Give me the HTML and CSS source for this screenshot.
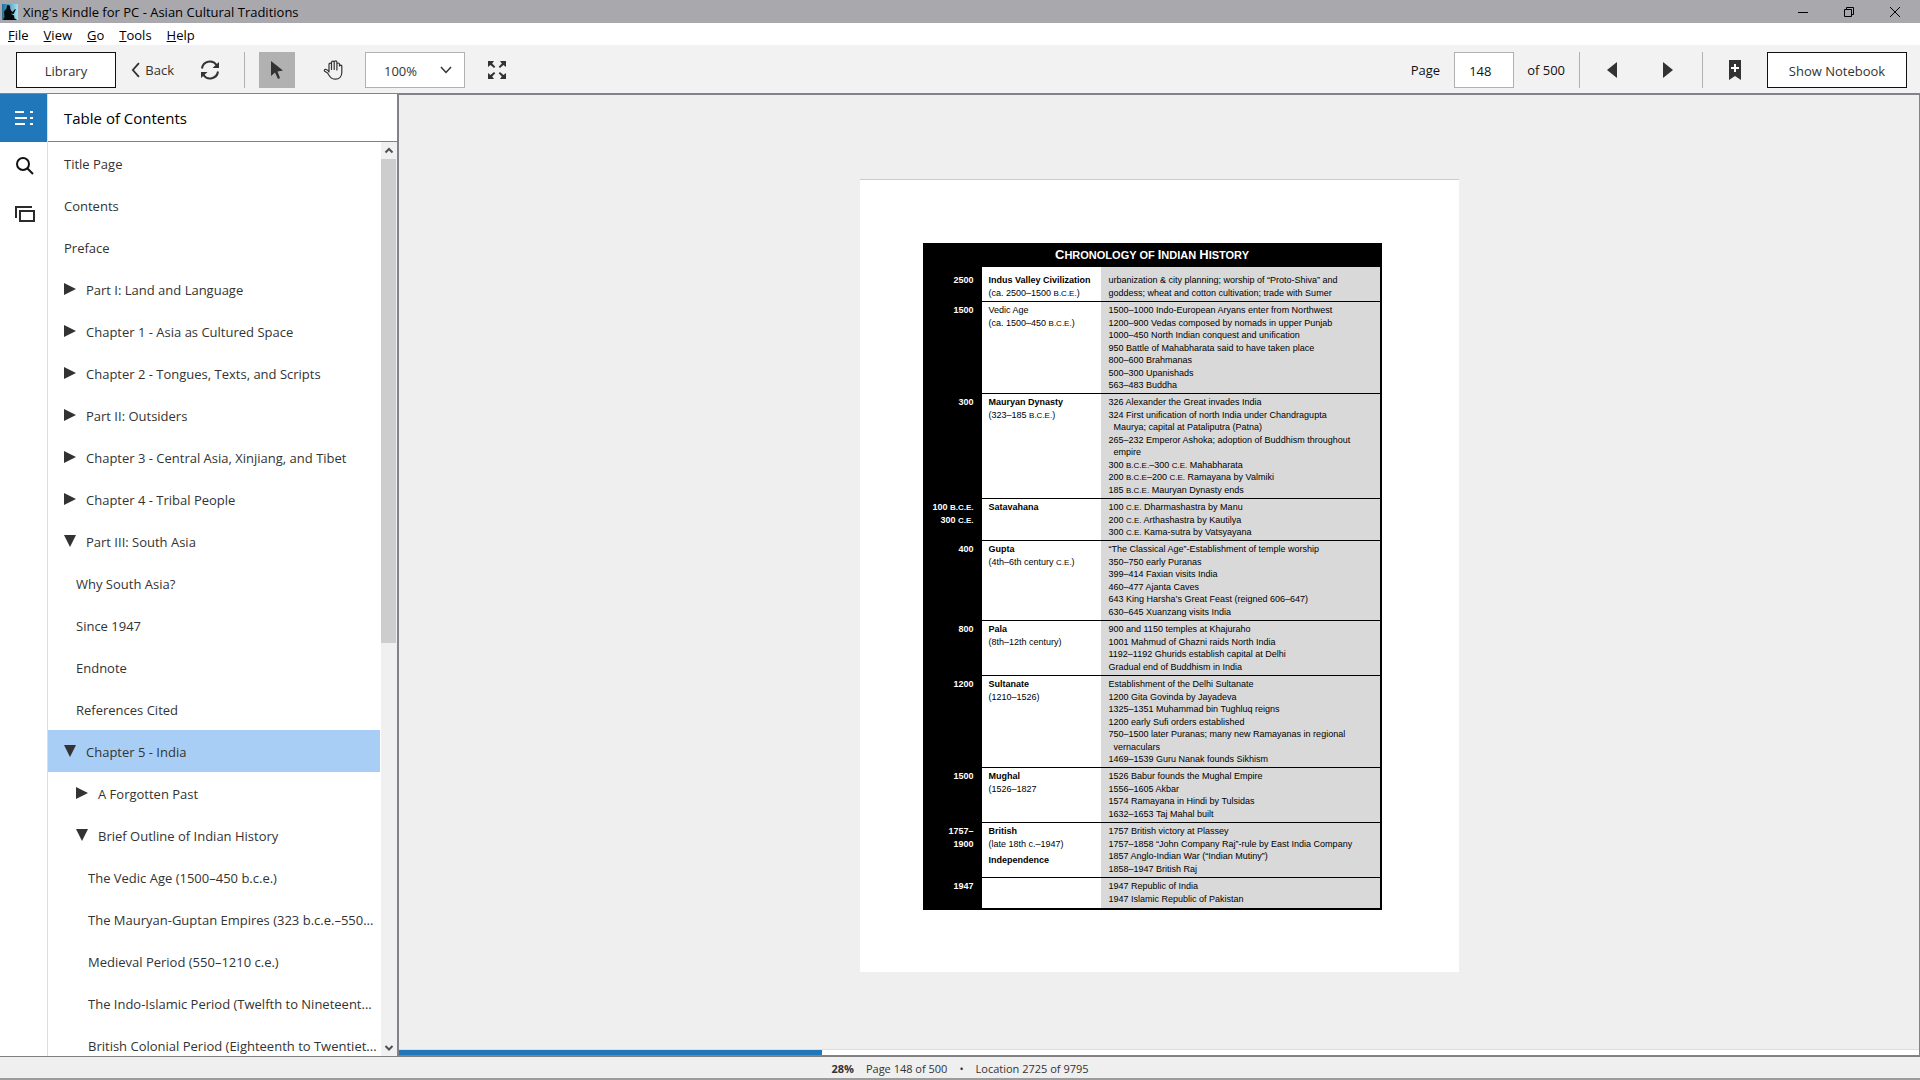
FILE: index.html
```html
<!DOCTYPE html>
<html lang="en">
<head>
    <meta charset="UTF-8">
    <meta name="viewport" content="width=device-width, initial-scale=1.0">
    <title>Xing's Kindle for PC - Asian Cultural Traditions</title>
    <link rel="stylesheet" href="styles.css">
</head>
<body>

    <header class="titlebar">
        <svg class="app-icon" width="16" height="16" viewBox="0 0 16 16">
            <defs>
                <linearGradient id="sky" x1="0" y1="0" x2="1" y2="0">
                    <stop offset="0" stop-color="#1f6f9c"/>
                    <stop offset="1" stop-color="#a5e3f2"/>
                </linearGradient>
            </defs>
            <rect width="16" height="16" fill="url(#sky)"/>
            <path d="M5 1.500a2 2 0 0 1 3 2.500l1 2.500 1.500 1.500L13 5l.8.500-2.300 4.500-3-.5 3.500 2 .5 3 2 .7v.8H1l1.500-3L2 7.500l2.500-3z" fill="#05090c"/>
        </svg>
        <span class="window-title">Xing's Kindle for PC - Asian Cultural Traditions</span>
        <div class="window-buttons">
            <button aria-label="Minimize"><svg width="12" height="12" viewBox="0 0 12 12"><path d="M1 6.5h10"/></svg></button>
            <button aria-label="Restore"><svg width="12" height="12" viewBox="0 0 12 12"><path d="M1.500 3.500h7v7h-7zM3.500 3.500v-2h7v7h-2"/></svg></button>
            <button aria-label="Close"><svg width="12" height="12" viewBox="0 0 12 12"><path d="M1 1l10 10M11 1L1 11"/></svg></button>
        </div>
    </header>

    <nav class="menubar">
        <a href="#"><u>F</u>ile</a>
        <a href="#"><u>V</u>iew</a>
        <a href="#"><u>G</u>o</a>
        <a href="#"><u>T</u>ools</a>
        <a href="#"><u>H</u>elp</a>
    </nav>

    <div class="toolbar">
        <button class="btn btn-library">Library</button>
        <button class="btn-back">
            <svg width="10" height="18" viewBox="0 0 10 18"><path d="M8.500 1.500L2 9l6.500 7.500" fill="none" stroke="#333" stroke-width="2"/></svg>
            Back
        </button>
        <button class="icon-btn btn-sync" aria-label="Sync">
            <svg width="20" height="20" viewBox="0 0 20 20">
                <path d="M2 8.500A8 8 0 0 1 16.500 5M18 11.500A8 8 0 0 1 3.500 15" fill="none" stroke="#333" stroke-width="2"/>
                <path d="M19 2v6h-6.500zM1 18v-6h6.500z" fill="#333"/>
            </svg>
        </button>
        <span class="separator"></span>
        <button class="icon-btn btn-pointer active" aria-label="Select">
            <svg width="12" height="18" viewBox="0 0 12 18"><path d="M0 0v15l4-3.500 3 6.500 2-1-2.500-6.500L12 9.500z" fill="#333"/></svg>
        </button>
        <button class="icon-btn btn-hand" aria-label="Pan">
            <svg width="20" height="20" viewBox="0 0 20 20">
                <path d="M6 12V4.300a1.200 1.200 0 0 1 2.500 0V9.500 2.500a1.200 1.200 0 0 1 2.700 0V9.500 2.300a1.200 1.200 0 0 1 2.700 0V10 4.300a1.200 1.200 0 0 1 2.600 0V6a1.200 1.200 0 0 1 2.300 0v6.500c0 4-2.500 6.700-6.300 6.700-3 0-4.800-1.200-6-3.200L4.500 13 1.700 11.300c-1-.8 0-2.300 1.500-1.800C4.600 10 5.500 11 6 12z" fill="none" stroke="#333" stroke-width="1.200" stroke-linejoin="round"/>
            </svg>
        </button>
        <div class="zoom">
            <select aria-label="Zoom level">
                <option>100%</option>
            </select>
            <svg width="12" height="8" viewBox="0 0 12 8"><path d="M1 1l5 5.500L11 1" fill="none" stroke="#333" stroke-width="1.500"/></svg>
        </div>
        <button class="icon-btn btn-full" aria-label="Full screen">
            <svg width="20" height="20" viewBox="0 0 20 20">
                <path d="M1 1h6L5.200 3.400 8.300 6.700 7 8 3.500 5 1 7zM19 1v6l-2.500-2L13 8l-1.300-1.300 3.100-3.300L13 1zM1 19v-6l2.500 2L7 12l1.300 1.300-3.100 3.300L7 19zM19 19h-6l1.800-2.400-3.100-3.300L13 12l3.500 3 2.500-2z" fill="#333"/>
            </svg>
        </button>

        <div class="toolbar-right">
            <label for="page-number">Page</label>
            <input id="page-number" type="text" value="148">
            <span class="page-total">of 500</span>
            <span class="separator"></span>
            <button class="icon-btn btn-prev" aria-label="Previous page">
                <svg width="10" height="16" viewBox="0 0 10 16"><path d="M10 0v16L0 8z" fill="#333"/></svg>
            </button>
            <button class="icon-btn btn-next" aria-label="Next page">
                <svg width="10" height="16" viewBox="0 0 10 16"><path d="M0 0v16l10-8z" fill="#333"/></svg>
            </button>
            <span class="separator"></span>
            <button class="icon-btn btn-bookmark" aria-label="Bookmark">
                <svg width="12" height="20" viewBox="0 0 12 20"><path d="M0 0h12v20l-6-4-6 4z" fill="#333"/><path d="M6 4v8M2 8h8" stroke="#fff" stroke-width="2"/></svg>
            </button>
            <button class="btn btn-notebook">Show Notebook</button>
        </div>
    </div>

    <div class="workspace">
        <div class="rail">
            <button class="rail-btn active" aria-label="Table of Contents">
                <svg width="20" height="16" viewBox="0 0 20 16"><path d="M0 2h9M0 8h12M0 14h10M15 2h3M15 8h3M15 14h3" stroke="#fff" stroke-width="2"/></svg>
            </button>
            <button class="rail-btn" aria-label="Search">
                <svg width="20" height="20" viewBox="0 0 20 20"><circle cx="8" cy="8" r="6" fill="none" stroke="#111" stroke-width="2"/><path d="M12 12l6 6" stroke="#111" stroke-width="2"/></svg>
            </button>
            <button class="rail-btn" aria-label="Flashcards">
                <svg width="20" height="16" viewBox="0 0 20 16"><path d="M1 12V1h16M5 5h14v10H5z" fill="none" stroke="#2b2b2b" stroke-width="2"/></svg>
            </button>
        </div>

        <aside class="toc">
            <h2>Table of Contents</h2>
            <div class="toc-body">
                <ul>
                    <li><a href="#">Title Page</a></li>
                    <li><a href="#">Contents</a></li>
                    <li><a href="#">Preface</a></li>
                    <li><a href="#" class="closed">Part I: Land and Language</a></li>
                    <li><a href="#" class="closed">Chapter 1 - Asia as Cultured Space</a></li>
                    <li><a href="#" class="closed">Chapter 2 - Tongues, Texts, and Scripts</a></li>
                    <li><a href="#" class="closed">Part II: Outsiders</a></li>
                    <li><a href="#" class="closed">Chapter 3 - Central Asia, Xinjiang, and Tibet</a></li>
                    <li><a href="#" class="closed">Chapter 4 - Tribal People</a></li>
                    <li><a href="#" class="open">Part III: South Asia</a></li>
                    <li class="level-2"><a href="#">Why South Asia?</a></li>
                    <li class="level-2"><a href="#">Since 1947</a></li>
                    <li class="level-2"><a href="#">Endnote</a></li>
                    <li class="level-2"><a href="#">References Cited</a></li>
                    <li class="selected"><a href="#" class="open">Chapter 5 - India</a></li>
                    <li class="level-2"><a href="#" class="closed">A Forgotten Past</a></li>
                    <li class="level-2"><a href="#" class="open">Brief Outline of Indian History</a></li>
                    <li class="level-3"><a href="#">The Vedic Age (1500–450 b.c.e.)</a></li>
                    <li class="level-3"><a href="#">The Mauryan-Guptan Empires (323 b.c.e.–550...</a></li>
                    <li class="level-3"><a href="#">Medieval Period (550–1210 c.e.)</a></li>
                    <li class="level-3"><a href="#">The Indo-Islamic Period (Twelfth to Nineteent...</a></li>
                    <li class="level-3"><a href="#">British Colonial Period (Eighteenth to Twentiet...</a></li>
                </ul>
                <div class="scrollbar">
                    <svg width="16" height="17" viewBox="0 0 16 17"><path d="M4.500 10.500L8 7l3.500 3.500" fill="none" stroke="#505050" stroke-width="2"/></svg>
                    <div class="track"><div class="thumb"></div></div>
                    <svg width="16" height="17" viewBox="0 0 16 17"><path d="M4.500 7L8 10.500 11.500 7" fill="none" stroke="#505050" stroke-width="2"/></svg>
                </div>
            </div>
        </aside>

        <main class="reader">
            <div class="canvas">
                <article class="page">
                    <table class="chronology">
                        <caption><span>C</span>hronology of <span>I</span>ndian <span>H</span>istory</caption>
                        <tr>
                            <th>2500</th>
                            <td><p><b>Indus Valley Civilization</b></p><p>(ca. 2500–1500 <small>B.C.E.</small>)</p></td>
                            <td><p>urbanization &amp; city planning; worship of “Proto-Shiva” and</p><p>goddess; wheat and cotton cultivation; trade with Sumer</p></td>
                        </tr>
                        <tr>
                            <th>1500</th>
                            <td><p>Vedic Age</p><p>(ca. 1500–450 <small>B.C.E.</small>)</p></td>
                            <td>
                                <p>1500–1000 Indo-European Aryans enter from Northwest</p>
                                <p>1200–900 Vedas composed by nomads in upper Punjab</p>
                                <p>1000–450 North Indian conquest and unification</p>
                                <p>950 Battle of Mahabharata said to have taken place</p>
                                <p>800–600 Brahmanas</p>
                                <p>500–300 Upanishads</p>
                                <p>563–483 Buddha</p>
                            </td>
                        </tr>
                        <tr>
                            <th>300</th>
                            <td><p><b>Mauryan Dynasty</b></p><p>(323–185 <small>B.C.E.</small>)</p></td>
                            <td>
                                <p>326 Alexander the Great invades India</p>
                                <p>324 First unification of north India under Chandragupta</p>
                                <p class="indent">Maurya; capital at Pataliputra (Patna)</p>
                                <p>265–232 Emperor Ashoka; adoption of Buddhism throughout</p>
                                <p class="indent">empire</p>
                                <p>300 <small>B.C.E.</small>–300 <small>C.E.</small> Mahabharata</p>
                                <p>200 <small>B.C.E</small>–200 <small>C.E.</small> Ramayana by Valmiki</p>
                                <p>185 <small>B.C.E.</small> Mauryan Dynasty ends</p>
                            </td>
                        </tr>
                        <tr>
                            <th><p>100 <small>B.C.E.</small></p><p>300 <small>C.E.</small></p></th>
                            <td><p><b>Satavahana</b></p></td>
                            <td>
                                <p>100 <small>C.E.</small> Dharmashastra by Manu</p>
                                <p>200 <small>C.E.</small> Arthashastra by Kautilya</p>
                                <p>300 <small>C.E.</small> Kama-sutra by Vatsyayana</p>
                            </td>
                        </tr>
                        <tr>
                            <th>400</th>
                            <td><p><b>Gupta</b></p><p>(4th–6th century <small>C.E.</small>)</p></td>
                            <td>
                                <p>“The Classical Age”-Establishment of temple worship</p>
                                <p>350–750 early Puranas</p>
                                <p>399–414 Faxian visits India</p>
                                <p>460–477 Ajanta Caves</p>
                                <p>643 King Harsha’s Great Feast (reigned 606–647)</p>
                                <p>630–645 Xuanzang visits India</p>
                            </td>
                        </tr>
                        <tr>
                            <th>800</th>
                            <td><p><b>Pala</b></p><p>(8th–12th century)</p></td>
                            <td>
                                <p>900 and 1150 temples at Khajuraho</p>
                                <p>1001 Mahmud of Ghazni raids North India</p>
                                <p>1192–1192 Ghurids establish capital at Delhi</p>
                                <p>Gradual end of Buddhism in India</p>
                            </td>
                        </tr>
                        <tr>
                            <th>1200</th>
                            <td><p><b>Sultanate</b></p><p>(1210–1526)</p></td>
                            <td>
                                <p>Establishment of the Delhi Sultanate</p>
                                <p>1200 Gita Govinda by Jayadeva</p>
                                <p>1325–1351 Muhammad bin Tughluq reigns</p>
                                <p>1200 early Sufi orders established</p>
                                <p>750–1500 later Puranas; many new Ramayanas in regional</p>
                                <p class="indent">vernaculars</p>
                                <p>1469–1539 Guru Nanak founds Sikhism</p>
                            </td>
                        </tr>
                        <tr>
                            <th>1500</th>
                            <td><p><b>Mughal</b></p><p>(1526–1827</p></td>
                            <td>
                                <p>1526 Babur founds the Mughal Empire</p>
                                <p>1556–1605 Akbar</p>
                                <p>1574 Ramayana in Hindi by Tulsidas</p>
                                <p>1632–1653 Taj Mahal built</p>
                            </td>
                        </tr>
                        <tr>
                            <th><p>1757–</p><p>1900</p></th>
                            <td><p><b>British</b></p><p>(late 18th c.–1947)</p><p class="spaced"><b>Independence</b></p></td>
                            <td>
                                <p>1757 British victory at Plassey</p>
                                <p>1757–1858 “John Company Raj”-rule by East India Company</p>
                                <p>1857 Anglo-Indian War (“Indian Mutiny”)</p>
                                <p>1858–1947 British Raj</p>
                            </td>
                        </tr>
                        <tr>
                            <th>1947</th>
                            <td></td>
                            <td>
                                <p>1947 Republic of India</p>
                                <p>1947 Islamic Republic of Pakistan</p>
                            </td>
                        </tr>
                    </table>
                </article>
            </div>
            <div class="progress"><div class="progress-fill" style="width: 27.82%"></div></div>
        </main>
    </div>

    <footer class="statusbar">
        <b>28%</b>
        <span>Page 148 of 500</span>
        <span>•</span>
        <span>Location 2725 of 9795</span>
    </footer>

</body>
</html>
```
FILE: styles.css
```css
* {
    box-sizing: border-box;
}

body {
    display: flex;
    flex-direction: column;
    height: 100vh;
    margin: 0;
    overflow: hidden;
    font-family: "Open Sans", sans-serif;
    font-size: 13px;
    color: #333;
    background-color: #fff;
}

button, input, select {
    font: inherit;
    color: inherit;
}

button {
    display: flex;
    align-items: center;
    justify-content: center;
    padding: 0;
    border: none;
    background: none;
}

a {
    color: inherit;
    text-decoration: none;
}

/* Title bar */
.titlebar {
    display: flex;
    align-items: center;
    height: 23px;
    padding: 0 2px;
    background-color: #a9a8ad;
    color: #000;
}

.window-title {
    margin-left: 5px;
}

.window-buttons {
    display: flex;
    margin-left: auto;
}

.window-buttons button {
    width: 46px;
    height: 20px;
}

.window-buttons svg {
    fill: none;
    stroke: #000;
}

/* Menu */
.menubar {
    display: flex;
    align-items: center;
    gap: 15px;
    height: 22px;
    padding: 2px 8px 0;
    color: #000;
}

/* Toolbar */
.toolbar {
    display: flex;
    align-items: center;
    height: 49px;
    padding: 2px 13px 0 16px;
    border-bottom: 1px solid #808488;
    background-color: #f2f2f2;
}

.btn {
    height: 36px;
    border: 1px solid #111;
    background-color: #fff;
    padding-top: 2px;
}

.btn-library {
    width: 100px;
}

.btn-notebook {
    width: 140px;
    margin-left: 14px;
    color: #333;
}

.btn-back {
    justify-content: flex-start;
    gap: 5px;
    width: 43px;
    margin-left: 15px;
    white-space: nowrap;
}

.icon-btn {
    width: 36px;
    height: 36px;
}

.icon-btn.active {
    background-color: #b1b1b1;
}

.btn-sync {
    margin-left: 18px;
    margin-right: 16px;
}

.separator {
    width: 1px;
    height: 36px;
    background-color: #b1b1b1;
}

.btn-pointer {
    margin-left: 14px;
}

.btn-hand {
    margin-left: 20px;
}

.zoom {
    position: relative;
    width: 100px;
    margin-left: 14px;
}

.zoom select {
    width: 100%;
    height: 36px;
    padding: 2px 18px 0;
    border: 1px solid #b1b1b1;
    border-radius: 0;
    background-color: #fff;
    appearance: none;
}

.zoom svg {
    position: absolute;
    right: 13px;
    top: 14px;
    pointer-events: none;
}

.btn-full {
    margin-left: 14px;
}

.toolbar-right {
    display: flex;
    align-items: center;
    margin-left: auto;
    color: #111;
}

#page-number {
    width: 60px;
    height: 36px;
    margin: 0 13px 0 14px;
    padding: 2px 14px 0;
    border: 1px solid #b1b1b1;
    background-color: #fff;
}

.page-total {
    margin-right: 14px;
}

.btn-prev {
    margin-left: 14px;
}

.btn-next {
    margin: 0 16px 0 20px;
}

.btn-bookmark {
    margin-left: 14px;
}

/* Workspace */
.workspace {
    display: flex;
    flex: 1;
    min-height: 0;
}

.rail {
    width: 48px;
    border-right: 1px solid #ddd;
}

.rail-btn {
    width: 47px;
    height: 48px;
    padding-left: 2px;
}

.rail-btn.active {
    background-color: #2077ba;
}

.toc {
    display: flex;
    flex-direction: column;
    width: 351px;
    border-right: 2px solid #808488;
}

.toc h2 {
    height: 48px;
    margin: 0;
    padding-left: 16px;
    border-bottom: 1px solid #808080;
    font-size: 15px;
    font-weight: normal;
    line-height: 49px;
    color: #000;
}

.toc-body {
    display: flex;
    flex: 1;
    min-height: 0;
}

.toc ul {
    flex: 1;
    margin: 0 1px 0 0;
    padding: 0;
    overflow: hidden;
    list-style: none;
}

.toc li {
    padding-left: 16px;
}

.toc li.level-2 {
    padding-left: 28px;
}

.toc li.level-3 {
    padding-left: 40px;
}

.toc li.selected {
    background-color: #a9cef6;
}

.toc a {
    display: flex;
    align-items: center;
    height: 42px;
    padding-top: 2px;
    line-height: 18px;
    white-space: nowrap;
}

/* disclosure triangles */
.toc a.closed::before,
.toc a.open::before {
    content: "";
    width: 12px;
    height: 12px;
    margin: 0 10px 2px 0;
    background-color: #333;
}

.toc a.closed::before {
    clip-path: polygon(0 0, 100% 50%, 0 100%);
}

.toc a.open::before {
    clip-path: polygon(0 0, 100% 0, 50% 100%);
}

.scrollbar {
    display: flex;
    flex-direction: column;
    width: 16px;
    background-color: #f0f0f0;
}

.track {
    flex: 1;
}

.thumb {
    width: 15px;
    height: 55%;
    background-color: #cdcdcd;
}

/* Reader */
.reader {
    display: flex;
    flex: 1;
    flex-direction: column;
    border: 1px solid #808488;
    border-left: none;
    background-color: #efefef;
}

.canvas {
    display: flex;
    flex: 1;
    align-items: center;
    justify-content: center;
    padding-top: 6px;
}

.page {
    width: 599px;
    padding: 63px 77px 62px 63px;
    border-top: 1px solid #ccc;
    background-color: #fff;
}

.chronology {
    width: 100%;
    border: 2px solid #000;
    border-top: none;
    border-left: none;
    border-spacing: 0;
    table-layout: fixed;
    font-family: "Liberation Sans", Arial, sans-serif;
    font-size: 9px;
    line-height: 12px;
    color: #000;
}

.chronology caption {
    height: 24px;
    background-color: #000;
    font-size: 11px;
    font-weight: bold;
    line-height: 24px;
    text-transform: uppercase;
    color: #fff;
}

.chronology caption span {
    font-size: 13px;
}

.chronology th,
.chronology td {
    padding: 2px 0 2px 7px;
    border-bottom: 1px solid #000;
    text-align: left;
    vertical-align: top;
    white-space: nowrap;
}

.chronology th {
    width: 59px;
    padding-right: 8px;
    background-color: #000;
    text-align: right;
    color: #fff;
}

.chronology td:nth-child(2) {
    width: 119px;
}

.chronology td:nth-child(3) {
    padding-left: 8px;
    background-color: #d9d9d9;
}

.chronology tr:first-child th,
.chronology tr:first-child td {
    padding-top: 7px;
}

.chronology tr:last-child td {
    padding-bottom: 3px;
    border-bottom: none;
}

.chronology p {
    margin: 0;
}

.chronology p:nth-child(even) {
    padding-top: 1px;
}

.chronology .indent {
    padding-left: 5px;
}

.chronology .spaced {
    padding-top: 4px;
}

.chronology small {
    font-size: 8px;
    line-height: 1;
}

.progress {
    height: 6px;
    border-top: 1px solid #ddd;
    background-color: #fff;
}

.progress-fill {
    height: 100%;
    background-color: #2077ba;
}

/* Status bar */
.statusbar {
    display: flex;
    align-items: center;
    justify-content: center;
    gap: 12px;
    height: 24px;
    padding-top: 2px;
    border-top: 1px solid #808080;
    border-bottom: 2px solid #9c9c9c;
    background-color: #efefef;
    font-size: 11px;
}
```
